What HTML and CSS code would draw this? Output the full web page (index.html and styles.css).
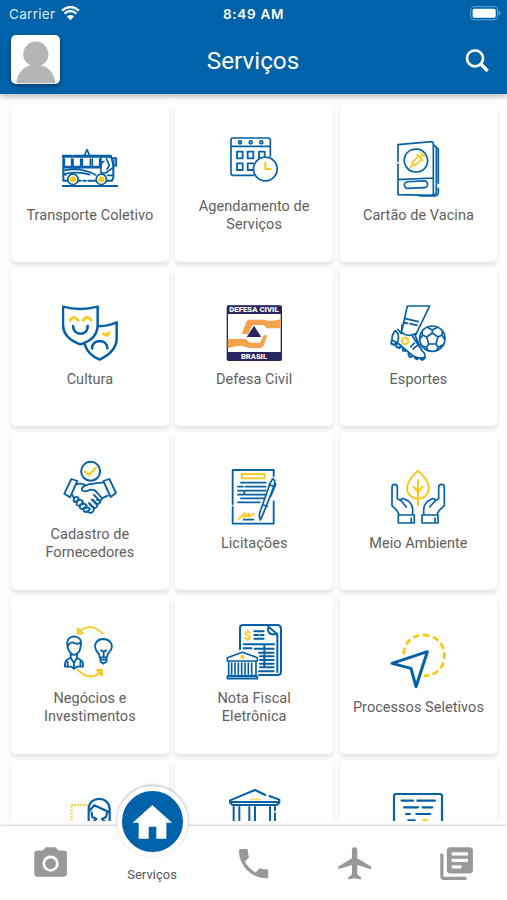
FILE: index.html
```html
<!DOCTYPE html>
<html lang="pt-BR">
<head>
<meta charset="utf-8">
<title>Serviços</title>
<link rel="stylesheet" href="styles.css">
</head>
<body>
<div class="app">
  <header class="header">
    <div class="status">
      <div class="carrier">Carrier
        <svg class="wifi" viewBox="184 17 58 44"><path d="M187 31Q213 9 239 31M195 40Q213 24 231 40" fill="none" stroke="#fff" stroke-width="7"/><path d="M202 49Q213 40 224 49L213 60Z" fill="#fff"/></svg>
      </div>
      <div class="clock">8:49 AM</div>
      <svg class="battery" viewBox="1410 17 94 44"><rect x="1412" y="19" width="82" height="40" rx="11" fill="none" stroke="#6ba3cf" stroke-width="3"/><rect x="1418" y="25" width="70" height="28" rx="6" fill="#fff"/><path d="M1497 31q10 8 0 16z" fill="#6ba3cf"/></svg>
    </div>
    <div class="toolbar">
      <div class="avatar"><svg viewBox="0 0 148 148"><circle cx="75" cy="58" r="38" fill="#b5b5b5"/><path d="M16 146C18 112 42 93 62 91H88C112 94 132 116 134 146Z" fill="#b5b5b5"/></svg></div>
      <h1 class="title">Serviços</h1>
      <svg class="search" viewBox="1396 143 74 74"><circle cx="1426" cy="174" r="24" fill="none" stroke="#fff" stroke-width="8"/><path d="M1443 191L1464 212" stroke="#fff" stroke-width="10"/></svg>
    </div>
  </header>

  <main class="content">
    <div class="grid">
      <div class="card">
        <svg class="icon" viewBox="185 126 168 168">
          <path d="M189 172V245H204M233 245H241M249 245H256M264 245H286M320 245H335L339 236V190L331 172" stroke-width="6"/>
          <path d="M187 172H214M221 172H331" stroke-width="9"/>
          <path d="M252 170L260 152L268 170M192 180V203H214V180M218 180V203H241V180M246 180V203H270V180M276 180V203H298V180M189 206H300M192 214C230 207 262 214 286 228M192 225C225 218 246 220 268 227M302 178V222H316M302 205Q302 190 311 187M316 222L339 205M318 178L327 200L320 210M334 177H348V200H341M189 222L196 228M322 229H337"/>
          <path d="M334 178H348V200H339Z" fill="#0560a6" fill-opacity=".5" stroke-width="3"/>
          <circle cx="218" cy="241" r="15.500" fill="#fff" stroke-width="5"/><circle cx="303" cy="241" r="15.500" fill="#fff" stroke-width="5"/>
          <circle class="sun" cx="218" cy="241" r="9.500"/><circle class="sun" cx="303" cy="241" r="9.500"/>
          <path d="M187 261H351" stroke-width="6"/>
        </svg>
        <p class="label">Transporte Coletivo</p>
      </div>
      <div class="card">
        <svg class="icon" viewBox="677 99 168 168">
          <path d="M760 229H698Q692 229 692 223V123Q692 117 698 117H804Q810 117 810 123V172M692 142H810"/>
          <path d="M710 158H727V178H710ZM742 158H759V178H742ZM776 178V158H793V170M710 193H727V213H710ZM759 193H742V213H757" stroke-width="5.500"/>
          <circle cx="719" cy="130" r="4.500"/><circle cx="751" cy="130" r="4.500"/><circle cx="783" cy="130" r="4.500"/>
          <circle cx="795" cy="210" r="35.500" fill="#fff"/>
          <path class="gold" d="M795 191V210H811" stroke-width="6"/>
        </svg>
        <p class="label">Agendamento de<br>Serviços</p>
      </div>
      <div class="card">
        <svg class="icon" viewBox="411 123 168 168">
          <path d="M435 184V134L534 125Q541 125 541 132V279Q541 286 534 286L435 284V192M435 239L541 234M541 135L550 141V272Q550 286 537 287M550 141L556 148V250M556 265V278Q555 288 545 288H500" />
          <path d="M472 151Q500 140 516 160C534 186 518 216 490 216C462 217 447 188 457 166Q462 157 468 154"/>
          <rect x="454" y="244" width="70" height="20" rx="10" transform="rotate(-3 489 254)"/>
          <path class="gold" d="M472 202L480 193M477 188L497 168L506 177L485 197ZM492 164L509 181M502 172L510 164M504 159L514 169"/>
        </svg>
        <p class="label">Cartão de Vacina</p>
      </div>

      <div class="card">
        <svg class="icon" viewBox="185 120 168 168">
          <path d="M288 184Q323 184 349 172V218C350 250 327 270 298 284C274 274 260 260 253 238" stroke-width="7.500"/>
          <path fill="#fff" d="M188 125Q240 139 292 125V178C292 210 273 229 240 238C208 227 188 207 188 178Z" stroke-width="7.500"/>
          <path d="M218 183C220 214 262 214 262 183M275 250C276 221 321 221 321 250" stroke-width="8"/>
          <path class="gold" d="M209 166Q220 148 233 166M249 166Q260 148 272 166" stroke-width="8.500"/>
          <path class="sun" d="M303 202Q318 207 331 197Q330 215 319 215Q306 214 303 202Z"/>
        </svg>
        <p class="label">Cultura</p>
      </div>
      <div class="card">
        <svg class="icon" viewBox="677 120 168 168">
          <rect x="681" y="123" width="162" height="163" rx="4" fill="#fff" stroke="#282560" stroke-width="4"/>
          <path d="M680 122H843V147H680ZM680 261H843V286H680Z" fill="#282560" stroke="none"/>
          <path d="M724 207L738 170Q741 164 748 164H790Q810 172 841 162V190H800L790 180H757L743 207ZM682 222H736Q744 232 754 233H779L790 211H801L790 242Q787 249 776 249H744Q730 240 706 244L682 250Z" fill="#f6a14b" stroke="none"/>
          <path d="M761 182L783 216H739Z" fill="#282560" stroke="none"/>
          <text class="seal" x="761" y="142" textLength="148" lengthAdjust="spacingAndGlyphs">DEFESA CIVIL</text>
          <text class="seal" x="761" y="281" textLength="78" lengthAdjust="spacingAndGlyphs">BRASIL</text>
        </svg>
        <p class="label">Defesa Civil</p>
      </div>
      <div class="card">
        <svg class="icon" viewBox="411 120 168 168">
          <path d="M446 200L463 123H530L487 212M454 160L496 170M451 172L464 175M471 176L492 181M446 202Q463 218 486 206M445 201Q447 188 447 180M427 197Q416 209 417 225L434 234L482 274Q500 283 515 277Q519 268 508 258L478 213M434 193L445 206M428 198Q441 207 434 230M485 209L506 255M473 246L484 234M480 252L493 241"/>
          <path d="M416 227L415 236L424 240L428 234M431 236L430 246L440 249L444 242M449 249L450 257L460 257M466 266L470 276L480 274M486 279L491 283L498 279M503 281L508 285L515 279" stroke-width="6"/>
          <circle class="gold" cx="456" cy="228" r="9.500" fill="#fff" stroke-width="6"/>
          <circle cx="538" cy="221" r="38"/>
          <path d="M538 204L555 216L549 237H527L521 216ZM538 204V194M555 216L567 210M549 237L556 248M527 237L520 248M521 216L508 210M523 187L538 195L554 187M568 199L567 211L575 223M569 240L556 247L551 256M526 257L520 247L506 242M500 223L509 211L507 201" />
        </svg>
        <p class="label">Esportes</p>
      </div>

      <div class="card">
        <svg class="icon" viewBox="185 93 168 168">
          <circle cx="271" cy="127" r="28.500" stroke-width="6"/>
          <path class="gold" d="M254 127L266 138L287 115" stroke-width="6.500"/>
          <path stroke-width="5.500" d="M213 150L231 156L209 205L192 194ZM327 150L309 156L331 204L347 192ZM228 166Q241 161 252 167M311 160L284 163Q266 163 252 171Q240 180 247 185Q255 190 271 182L284 184L302 204Q307 211 300 215Q295 217 290 212M322 200L305 208M215 197L222 208M281 198L300 217Q299 225 290 225L277 212M274 212L291 228Q290 238 281 237L266 222M268 227L281 238Q281 249 271 252L258 247"/>
          <path stroke-width="5.500" d="M222 207Q217 218 223 219Q230 219 235 209Q231 199 222 207ZM232 215Q224 229 234 230Q242 229 248 219Q242 208 232 215ZM241 227Q234 239 245 240Q253 239 259 230Q253 220 241 227ZM251 240Q247 249 257 249Q265 248 269 240Q263 231 251 240Z"/>
        </svg>
        <p class="label">Cadastro de<br>Fornecedores</p>
      </div>
      <div class="card">
        <svg class="icon" viewBox="677 118 168 168">
          <path stroke-width="5.500" d="M697 224V121H820V140M697 232V282H820V215M713 218H778M722 206H790M713 195H728M736 195H796M713 183H728M736 183H796M713 171H728M736 171H796M722 159H796M732 183V194M730 270H759"/>
          <rect class="gold" x="724" y="133" width="69" height="13" stroke-width="5.500"/>
          <path class="gold" stroke-width="5.500" d="M713 270L734 250L731 263L746 252L744 262L760 252"/>
          <path fill="#fff" d="M809 162L817 147L823 153V163L802 219Q794 240 780 271Q774 258 780 244ZM806 165L821 170M787 225L800 230M783 265L793 242M823 160L826 164L811 200"/>
        </svg>
        <p class="label">Licitações</p>
      </div>
      <div class="card">
        <svg class="icon" viewBox="411 118 168 168">
          <path class="gold" stroke-width="6" d="M495 123Q465 149 462 174Q462 202 495 208Q527 203 528 174Q525 149 495 123ZM495 151V227M481 171L495 187L509 171M486 175L495 184"/>
          <path d="M437 253L432 243L417 228V173Q417 164 425 164Q433 164 433 173V207L444 213Q443 206 453 207L467 215Q478 224 479 240V252M444 213L460 232M436 256H484V280H436ZM475 265V280"/>
          <path d="M553 253L558 243L574 228V173Q574 164 566 164Q557 164 557 173V207L547 213Q547 206 538 207L524 215Q513 224 512 240V252M547 213L530 232M507 256H555V280H507ZM546 265V280"/>
        </svg>
        <p class="label">Meio Ambiente</p>
      </div>

      <div class="card">
        <svg class="icon" viewBox="185 90 168 168">
          <path class="gold" d="M307 119Q273 83 235 113M232 103V119H248L232 103M231 226Q267 264 303 234M290 228H305V244L290 228" stroke-width="5.500"/>
          <path stroke-width="5.500" d="M202 160Q195 130 221 127Q249 130 240 161L237 172Q222 193 207 173ZM202 158Q206 146 217 145Q229 153 241 146M211 181V191L198 199Q193 204 194 218H213L221 224L230 218H248Q249 204 242 199L230 191V181M211 191L221 207L230 191M202 204V217M240 204V217M221 207V223"/>
          <path stroke-width="5.500" d="M298 190Q299 182 291 174C276 154 288 135 310 135C333 137 342 157 327 174Q319 182 320 190ZM300 193V202L309 209L319 202V193M302 169L310 173L318 169M310 173V188M302 197H317"/>
        </svg>
        <p class="label">Negócios e<br>Investimentos</p>
      </div>
      <div class="card">
        <svg class="icon" viewBox="677 90 168 168">
          <path stroke-width="6" d="M719 166V101Q719 93 728 93H830Q842 93 842 105V233Q842 243 832 243H776M803 97L831 121H815Q803 118 803 104M831 124V234M730 151H821M730 163H753M762 112H790M762 123H774M781 123H790M762 134H790M763 164H820M776 176H820M779 187H820M779 198H820M779 209H820M779 220H820M776 232H820M792 151V220"/>
          <text class="coin" x="742" y="139">$</text>
          <path fill="#fff" d="M681 201V191L726 175L771 191V201ZM685 201H767V245H685ZM681 247H771V254H681ZM694 207V239M704 207V239M714 207V239M724 207V239M734 207V239M744 207V239M754 207V239" />
          <circle class="sun" cx="726" cy="189" r="6"/>
        </svg>
        <p class="label">Nota Fiscal<br>Eletrônica</p>
      </div>
      <div class="card">
        <svg class="icon" viewBox="411 115 168 168">
          <path class="gold" stroke-width="9" stroke-dasharray="12 18" d="M452 175C457 138 483 121 513 121C550 122 574 149 574 182C574 220 550 242 516 243"/>
          <path stroke-width="9" d="M417 206L523 171L489 276L474 221Z"/>
        </svg>
        <p class="label">Processos Seletivos</p>
      </div>

      <div class="card card-cut">
        <svg class="icon" viewBox="185 117 168 168">
          <path class="gold" stroke-dasharray="5 4" stroke-linecap="butt" d="M214 211V165H262" stroke-width="6"/>
          <path stroke-width="6.500" d="M265 213V175C268 137 326 137 328 176V213M266 184L282 166L327 187M274 188L276 201L288 207L275 220M320 188L317 201L305 207L320 220"/>
        </svg>
      </div>
      <div class="card card-cut">
        <svg class="icon" viewBox="677 117 168 168">
          <path stroke-width="6" d="M837 158V149L807 138M795 135L764 120L689 151V158L697 165H829L837 158M690 156H835M700 171V215M717 171V215M747 171V215M764 171V215M809 171V215M824 171V181M824 190V215"/>
          <path class="gold" stroke-dasharray="5 3" stroke-linecap="butt" d="M750 148H780" stroke-width="5"/>
        </svg>
      </div>
      <div class="card card-cut">
        <svg class="icon" viewBox="411 117 168 168">
          <path stroke-width="6.500" d="M423 230V138Q423 132 429 132H561Q567 132 567 138V230M446 152H480M493 152H546M453 172H495M509 172H538M459 192H471M490 192H532M466 211H485"/>
          <path class="gold" stroke-width="6" d="M511 211H524"/>
        </svg>
      </div>
    </div>
  </main>

  <nav class="nav">
    <div class="tabs">
      <a class="tab"><svg viewBox="0 0 24 24"><path fill-rule="evenodd" d="M9 2L7.200 4H4a2 2 0 0 0-2 2v12a2 2 0 0 0 2 2h16a2 2 0 0 0 2-2V6a2 2 0 0 0-2-2h-3.200L15 2zM12 7a5 5 0 1 1 0 10a5 5 0 0 1 0-10z"/><circle cx="12" cy="12" r="3.300"/></svg></a>
      <a class="tab tab-active">
        <span class="home"><svg viewBox="397 160 122 107"><path d="M458 163L517 216H500V264H470V228H447V264H417V216H399Z"/></svg></span>
        <span class="tab-label">Serviços</span>
      </a>
      <a class="tab"><svg viewBox="0 0 24 24"><path d="M6.620 10.790c1.440 2.830 3.760 5.140 6.590 6.590l2.200-2.200c.27-.27.67-.36 1.020-.24 1.120.37 2.330.57 3.570.57.55 0 1 .45 1 1V20c0 .55-.45 1-1 1C10.610 21 3 13.390 3 4c0-.55.45-1 1-1h3.500c.55 0 1 .45 1 1 0 1.250.2 2.450.57 3.570.11.35.03.74-.25 1.020z"/></svg></a>
      <a class="tab"><svg viewBox="248 281 118 118"><path d="M357 357V349L315 324V299Q315 291 307 291Q299 291 299 299V324L258 349V357L299 344V373L288 381V388L307 384L326 388V381L315 373V344Z"/></svg></a>
      <a class="tab"><svg viewBox="0 0 24 24"><path d="M4 6H2v14c0 1.100.9 2 2 2h14v-2H4V6zm16-4H8c-1.100 0-2 .9-2 2v12c0 1.100.9 2 2 2h12c1.100 0 2-.9 2-2V4c0-1.100-.9-2-2-2zm-1 9H9V9h10v2zm-4 4H9v-2h6v2zm4-8H9V5h10v2z"/></svg></a>
    </div>
  </nav>
</div>
</body>
</html>
```
FILE: styles.css
```css
* { box-sizing: border-box; }
body { margin: 0; font-family: Roboto, sans-serif; background: #fdfdfd; }
.app { display: flex; flex-direction: column; height: 900px; width: 507px; overflow: hidden; }

.header { height: 94px; flex: none; background: #0062a8; color: #fff; z-index: 1; box-shadow: 0 2px 6px rgba(0, 0, 0, .3); }
.status { height: 27px; padding: 0 6px 0 9px; display: grid; grid-template-columns: 1fr auto 1fr; align-items: center; font-family: Inter, sans-serif; font-size: 13.500px; }
.carrier { display: flex; align-items: center; gap: 6px; color: #dbe9f5; letter-spacing: .3px; }
.wifi { width: 19px; height: 14.500px; }
.clock { font-weight: 600; letter-spacing: .7px; margin-right: 3px; }
.battery { width: 31px; height: 14.500px; justify-self: end; }
.toolbar { display: grid; grid-template-columns: 1fr auto 1fr; align-items: center; height: 67px; padding: 0 17px 0 11px; }
.avatar { width: 49px; height: 49px; border-radius: 5px; background: #fff; box-shadow: 0 2px 5px rgba(0, 0, 0, .4); overflow: hidden; position: relative; top: -1px; }
.avatar svg { display: block; width: 49px; height: 49px; }
.title { margin: 0 0 0 5px; font-size: 24.300px; font-weight: 400; line-height: 30px; }
.search { width: 24.700px; height: 24.700px; justify-self: end; }

.content { flex: 1; min-height: 0; overflow: hidden; }
.grid { display: grid; grid-template-columns: repeat(3, 1fr); grid-auto-rows: 158px; gap: 6px 6.500px; padding: 9.500px 9.700px 0 11px; }
.card { display: flex; flex-direction: column; align-items: center; justify-content: center; background: #fff; border-radius: 5px; box-shadow: 0 3px 5px rgba(0, 0, 0, .11); }
.card-cut { justify-content: flex-start; padding-top: 29px; }
.icon { width: 56px; height: 56px; flex: none; fill: none; stroke: #0560a6; stroke-width: 5; stroke-linecap: round; stroke-linejoin: round; }
.gold { stroke: #fbc91b; }
.sun { fill: #fbc91b; stroke: none; }
.seal { font: 900 20px Roboto, sans-serif; fill: #fff; stroke: none; text-anchor: middle; }
.coin { font: 700 41px Roboto, sans-serif; fill: #fbc91b; stroke: none; text-anchor: middle; }
.label { margin: 10.300px 0 0; font-size: 14.500px; line-height: 17.200px; color: #606060; text-align: center; letter-spacing: .04px; }

.nav { flex: none; height: 79px; padding-top: 5px; background: #fff; z-index: 1; }
.tabs { height: 74px; display: grid; grid-template-columns: repeat(5, 1fr); background: #fff; box-shadow: 0 0 3px rgba(0, 0, 0, .35); }
.tab { position: relative; display: flex; flex-direction: column; align-items: center; padding-top: 17.700px; }
.tab > svg { width: 39.200px; height: 39.200px; fill: #999; }
.home { position: absolute; top: -40px; left: 50%; width: 71px; height: 71px; margin-left: -35px; border: 5px solid #fff; border-radius: 50%; background: #0062a8; box-shadow: 0 -1px 3px rgba(0, 0, 0, .3); display: flex; align-items: center; justify-content: center; }
.home svg { width: 40.700px; height: 35.700px; fill: #fff; }
.tab-active { padding-top: 41px; }
.tab-label { font-size: 13px; line-height: 16px; color: #555; letter-spacing: .05px; }
```
